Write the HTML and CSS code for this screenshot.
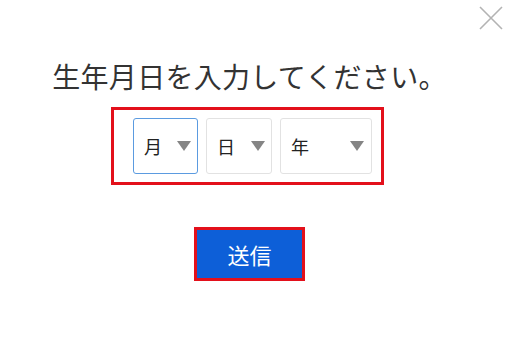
FILE: index.html
```html
<!DOCTYPE html>
<html lang="ja">
<head>
<meta charset="utf-8">
<link rel="stylesheet" href="styles.css">
</head>
<body>
<div class="modal">
  <button class="close" aria-label="閉じる">
    <svg width="26" height="26" viewBox="0 0 26 26"><path d="M2 2 L24 24 M24 2 L2 24" stroke="#b3b3b3" stroke-width="1.6" fill="none"/></svg>
  </button>
  <div class="content">
    <h1 class="title">生年月日を入力してください。</h1>
    <div class="field-box">
      <div class="select select-month focused"><span>月</span><i class="arrow"></i></div>
      <div class="select select-day"><span>日</span><i class="arrow"></i></div>
      <div class="select select-year"><span>年</span><i class="arrow"></i></div>
    </div>
    <div class="btn-box">
      <button class="submit">送信</button>
    </div>
  </div>
</div>
</body>
</html>
```
FILE: styles.css
```css
* { box-sizing: border-box; }
html, body {
  margin: 0;
  padding: 0;
  background: #fff;
  width: 510px;
  height: 341px;
  overflow: hidden;
  font-family: "Noto Sans CJK JP", "Noto Sans", sans-serif;
}
.modal {
  position: relative;
  width: 510px;
  height: 341px;
}
.close {
  position: absolute;
  top: 5px;
  right: 6px;
  width: 26px;
  height: 26px;
  padding: 0;
  border: 0;
  background: none;
}
.close svg { display: block; }
.content {
  display: flex;
  flex-direction: column;
  align-items: center;
  padding-top: 59px;
  padding-right: 15px;
}
.title {
  margin: 0;
  font-size: 28px;
  font-weight: 400;
  line-height: 35px;
  color: #333;
  letter-spacing: 0.3px;
  padding-left: 4px;
}
.field-box {
  margin-top: 13px;
  display: flex;
  gap: 8px;
  border: 3px solid #e3101b;
  padding: 8px 9px 8px 19px;
}
.select {
  height: 56px;
  border: 1px solid #e2e2e2;
  border-radius: 3px;
  display: flex;
  align-items: center;
  justify-content: space-between;
  padding: 0 6px 0 10px;
  font-size: 18px;
  color: #222;
  background: #fff;
}
.select.focused { border-color: #5b9be0; }
.select-month { width: 65px; }
.select-day { width: 66px; }
.select-year { width: 92px; padding-right: 7px; }
.arrow {
  width: 0;
  height: 0;
  border-left: 7px solid transparent;
  border-right: 7px solid transparent;
  border-top: 10px solid #858585;
}
.btn-box {
  margin-top: 42px;
  border: 3px solid #e3101b;
  margin-left: 4px;
}
.submit {
  display: block;
  width: 105px;
  height: 48px;
  border: 0;
  margin: 0;
  background: #0d5fd8;
  color: #fff;
  font-family: "Noto Sans CJK JP", "Noto Sans", sans-serif;
  font-size: 22px;
  line-height: 48px;
  padding: 0;
}
```
